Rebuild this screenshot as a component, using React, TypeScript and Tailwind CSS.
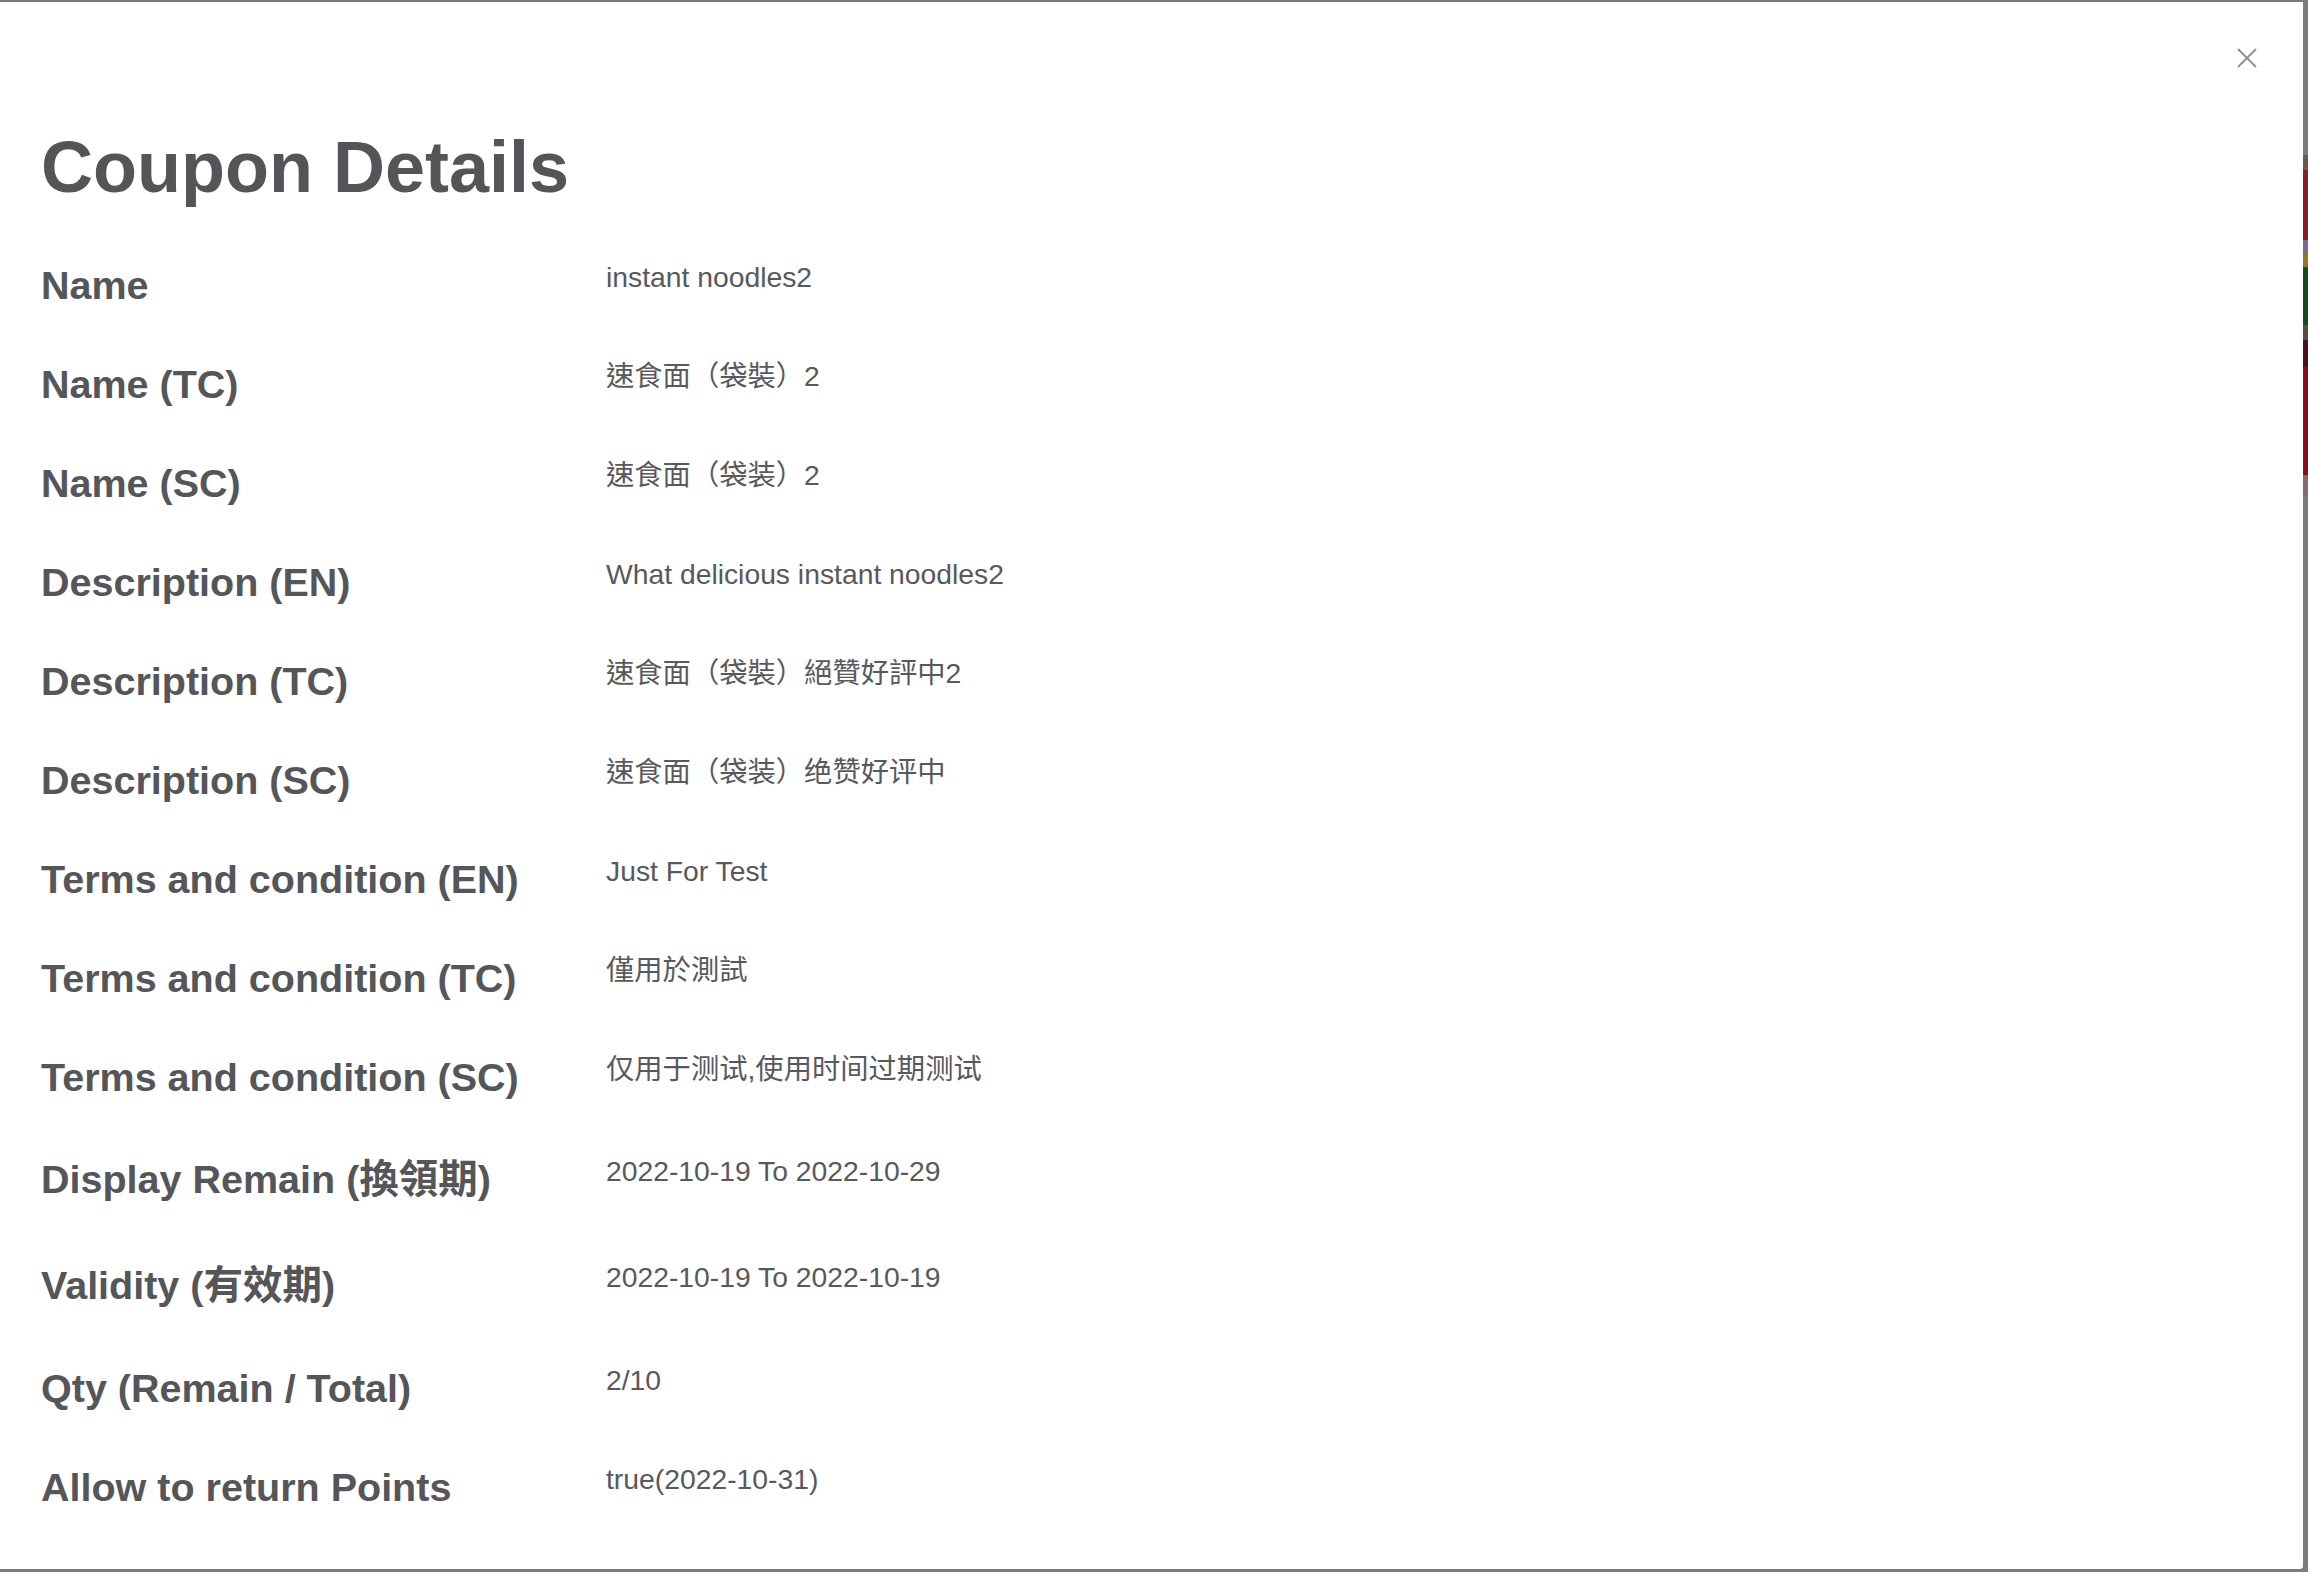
import { FC } from "react"

type Row = { label: string; value: string; tall?: boolean }

const rows: Row[] = [
  { label: "Name", value: "instant noodles2" },
  { label: "Name (TC)", value: "速食面（袋裝）2" },
  { label: "Name (SC)", value: "速食面（袋装）2" },
  { label: "Description (EN)", value: "What delicious instant noodles2" },
  { label: "Description (TC)", value: "速食面（袋裝）絕贊好評中2" },
  { label: "Description (SC)", value: "速食面（袋装）绝赞好评中" },
  { label: "Terms and condition (EN)", value: "Just For Test" },
  { label: "Terms and condition (TC)", value: "僅用於測試" },
  { label: "Terms and condition (SC)", value: "仅用于测试,使用时间过期测试" },
  { label: "Display Remain (換領期)", value: "2022-10-19 To 2022-10-29", tall: true },
  { label: "Validity (有效期)", value: "2022-10-19 To 2022-10-19", tall: true },
  { label: "Qty (Remain / Total)", value: "2/10" },
  { label: "Allow to return Points", value: "true(2022-10-31)" },
]

// page behind the overlay peeks out on the right edge
const peek = [
  { h: 15, c: "bg-[#6e5848]" },
  { h: 70, c: "bg-[#8c1b2b]" },
  { h: 13, c: "bg-[#7a6a8a]" },
  { h: 14, c: "bg-[#8f7a1e]" },
  { h: 58, c: "bg-[#124d1e]" },
  { h: 15, c: "bg-[#5a4a4a]" },
  { h: 27, c: "bg-[#50101a]" },
  { h: 108, c: "bg-[#880e1a]" },
  { h: 20, c: "bg-[#8a6a70]" },
]

const DetailRow: FC<{ row: Row }> = ({ row }) => (
  <div className={`flex items-start ${row.tall ? "pt-[3px] pb-[4px]" : ""}`}>
    <div className="w-[565px] shrink-0 text-[39.5px] leading-[48px] font-bold text-[#54565a]">
      {row.label}
    </div>
    <div className="text-[28.3px] leading-[32px] text-[#57595d]">{row.value}</div>
  </div>
)

const App: FC = () => {
  return (
    <div
      className="relative min-h-screen bg-[#7b7b7b] pt-[2px] pr-[5px] pb-[3px]"
      style={{ fontFamily: '"Liberation Sans", "Noto Sans CJK TC", sans-serif' }}
    >
      <div className="absolute right-0 top-[155px] flex w-[5px] flex-col">
        {peek.map((p, i) => (
          <div key={i} className={p.c} style={{ height: p.h }} />
        ))}
      </div>

      <div className="relative h-[1567px] rounded-br-[3px] bg-white pl-[41px] pt-[122px]">
        <button className="absolute right-[46px] top-[46px] text-[#8e9196]" aria-label="Close">
          <svg width="20" height="20" viewBox="0 0 20 20" fill="none" stroke="currentColor" strokeWidth="2">
            <line x1="1" y1="1" x2="19" y2="19" />
            <line x1="19" y1="1" x2="1" y2="19" />
          </svg>
        </button>

        <div className="flex flex-col gap-[51px]">
          <h2 className="text-[72px] leading-[86px] font-bold text-[#545559]">Coupon Details</h2>
          {rows.map((row) => (
            <DetailRow key={row.label} row={row} />
          ))}
        </div>
      </div>
    </div>
  )
}

export default App
